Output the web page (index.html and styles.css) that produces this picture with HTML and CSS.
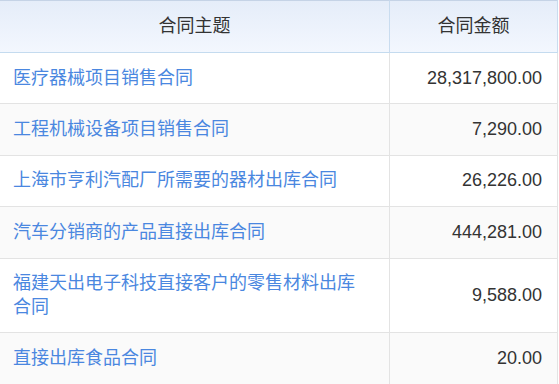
FILE: index.html
```html
<!DOCTYPE html>
<html lang="zh-CN">
<head>
<meta charset="utf-8">
<title>合同列表</title>
<link rel="stylesheet" href="styles.css">
</head>
<body>
<table class="grid">
  <colgroup>
    <col class="col-title">
    <col class="col-amount">
  </colgroup>
  <thead>
    <tr>
      <th class="head-cell head-title">合同主题</th>
      <th class="head-cell head-amount">合同金额</th>
    </tr>
  </thead>
  <tbody>
    <tr class="row">
      <td class="cell cell-title"><a class="link" href="#">医疗器械项目销售合同</a></td>
      <td class="cell cell-amount">28,317,800.00</td>
    </tr>
    <tr class="row row-alt">
      <td class="cell cell-title"><a class="link" href="#">工程机械设备项目销售合同</a></td>
      <td class="cell cell-amount">7,290.00</td>
    </tr>
    <tr class="row">
      <td class="cell cell-title"><a class="link" href="#">上海市亨利汽配厂所需要的器材出库合同</a></td>
      <td class="cell cell-amount">26,226.00</td>
    </tr>
    <tr class="row row-alt">
      <td class="cell cell-title"><a class="link" href="#">汽车分销商的产品直接出库合同</a></td>
      <td class="cell cell-amount">444,281.00</td>
    </tr>
    <tr class="row">
      <td class="cell cell-title"><a class="link" href="#">福建天出电子科技直接客户的零售材料出库合同</a></td>
      <td class="cell cell-amount">9,588.00</td>
    </tr>
    <tr class="row row-alt">
      <td class="cell cell-title"><a class="link" href="#">直接出库食品合同</a></td>
      <td class="cell cell-amount">20.00</td>
    </tr>
  </tbody>
</table>
</body>
</html>
```
FILE: styles.css
```css
html, body {
  margin: 0;
  padding: 0;
  background: #ffffff;
}

body {
  font-family: "Liberation Sans", "Noto Sans CJK SC", sans-serif;
  font-size: 18px;
  color: #333333;
}

.grid {
  table-layout: fixed;
  width: 558px;
  border-collapse: separate;
  border-spacing: 0;
}

.col-title {
  width: 390px;
}

.col-amount {
  width: 168px;
}

.head-cell {
  box-sizing: border-box;
  height: 53px;
  padding: 0;
  font-weight: normal;
  text-align: center;
  line-height: 23px;
  color: #333333;
  background: linear-gradient(to bottom, #e5edf9, #f3f7fe);
  border-top: 1px solid #c5d3e6;
  border-bottom: 1px solid #c4dbef;
  border-right: 1px solid #c9dcef;
}

.cell {
  padding: 13.5px 13px 13.5px 13px;
  line-height: 23.4px;
  border-bottom: 1px solid #e3e3e3;
  border-right: 1px solid #e3e3e3;
  vertical-align: middle;
}

.cell-title {
  padding-right: 28px;
}

.cell-amount {
  text-align: right;
  padding-right: 15px;
  color: #333333;
}

.row-alt .cell {
  background: #fafafa;
}

.link {
  color: #4a87e0;
  text-decoration: none;
}
```
